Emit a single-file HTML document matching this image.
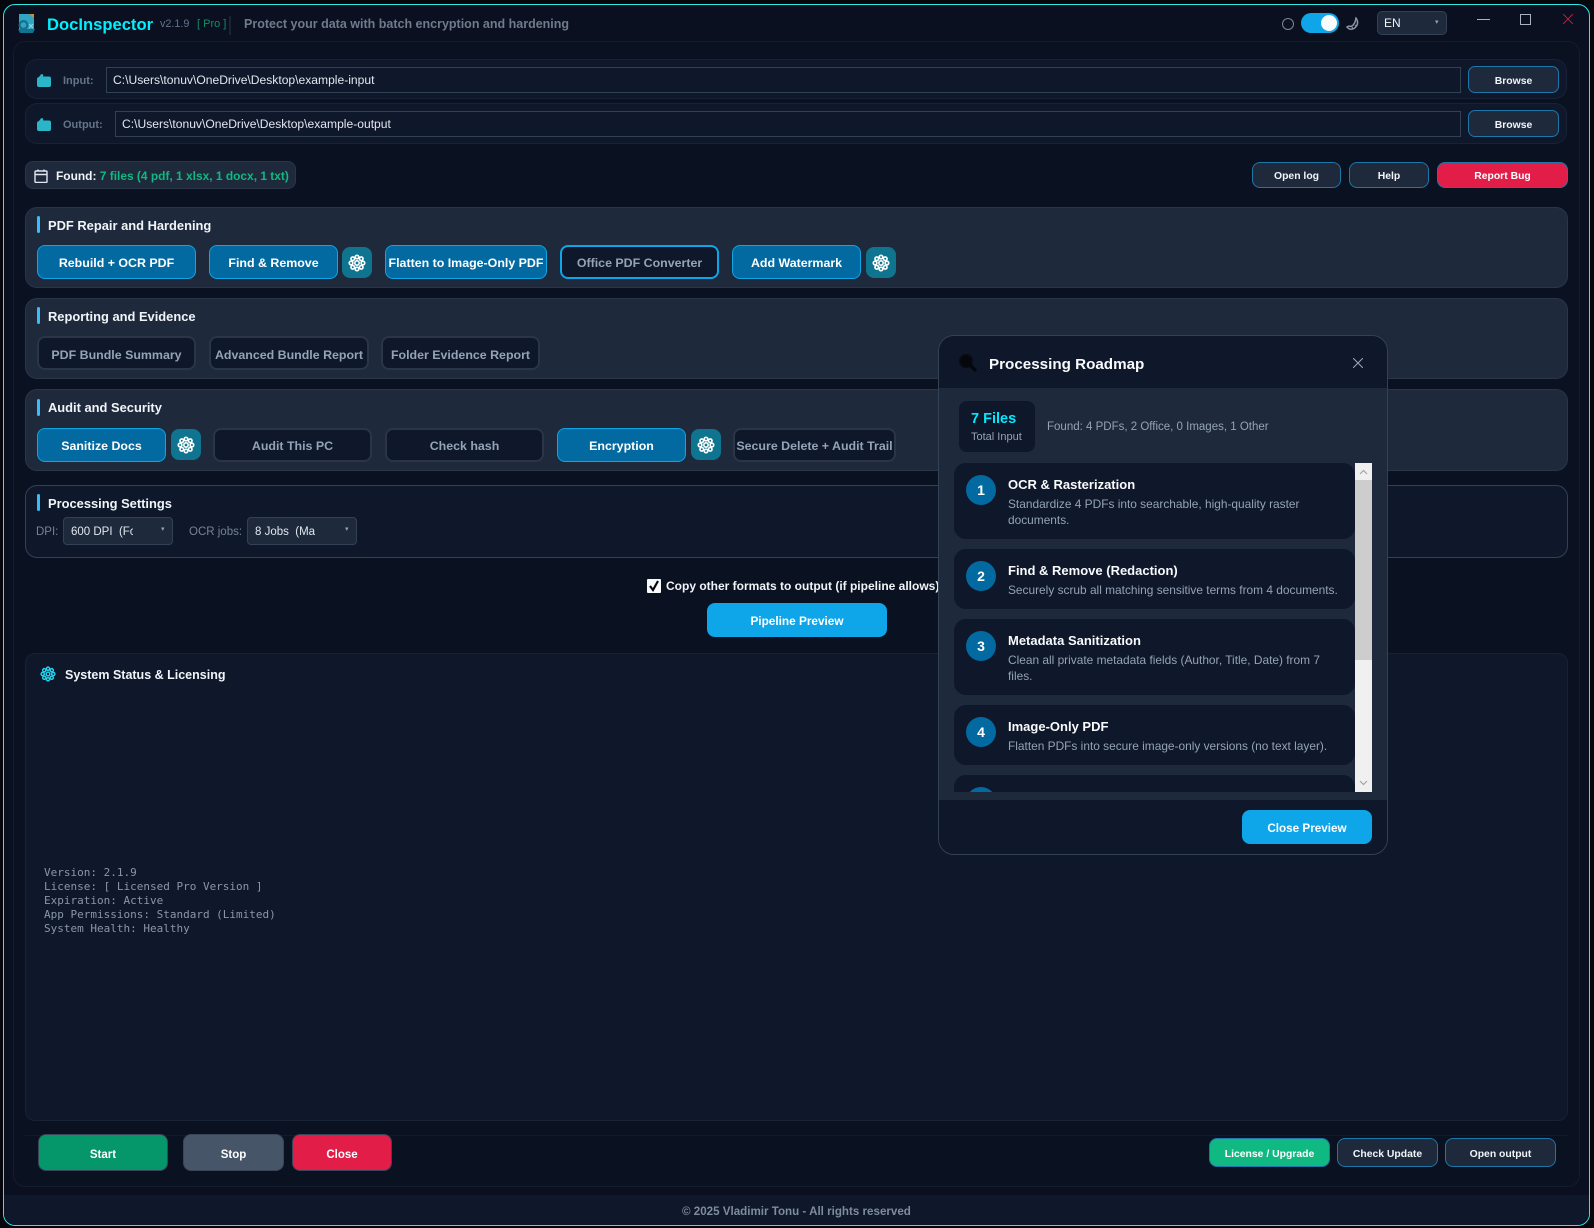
<!DOCTYPE html>
<html><head><meta charset="utf-8"><title>DocInspector</title>
<style>
*{box-sizing:border-box}
html,body{margin:0;padding:0;width:1594px;height:1228px;overflow:hidden;background:#05070d;font-family:"Liberation Sans",sans-serif}
.a{position:absolute}
.t{position:absolute;white-space:pre;line-height:16px}
.b{position:absolute;display:flex;align-items:center;justify-content:center;white-space:nowrap;font-weight:bold;font-size:12.4px;color:#fff;border-radius:8px}
.p{background:#0369a1;border:1.5px solid #0ea5e9;padding-top:1px}
.o{background:#0f172a;border:2px solid #0ea5e9;color:#94a3b8;padding-top:1px}
.d{background:#0f172a;border:2px solid #2a3648;color:#94a3b8;padding-top:4px}
.s{background:#1e293b;border:1.5px solid #1f76a8;font-size:10.4px;color:#f1f5f9;padding-top:2px}
.g{background:#0e7490;border-radius:8px;width:30px;height:31px;display:flex;align-items:center;justify-content:center}
.sec{position:absolute;left:25px;width:1543px;background:#1e293b;border:1px solid #2a3648;border-radius:12px}
.bar{position:absolute;left:37px;width:3px;height:17px;background:#38bdf8;border-radius:2px}
.st{position:absolute;left:48px;font-size:12.9px;font-weight:bold;color:#f1f5f9;line-height:18px;white-space:pre}
.row{position:absolute;left:25px;width:1542px;background:#0f172a;border:1px solid #182235;border-radius:12px}
.in{position:absolute;background:#0f172a;border:1px solid #334155;color:#e2e8f0;font-size:12.1px;line-height:24px;padding-left:6px;white-space:pre}
.combo{position:absolute;background:#1e293b;border:1px solid #334155;border-radius:4px;height:28px;color:#e2e8f0;font-size:11.5px}
.card{position:absolute;left:0;width:401px;background:#0f172a;border-radius:12px}
.c{position:absolute;left:12px;top:12px;width:30px;height:30px;border-radius:50%;background:#0369a1;color:#fff;font-weight:bold;font-size:14px;display:flex;align-items:center;justify-content:center}
.ct{position:absolute;left:54px;top:13px;color:#f8fafc;font-weight:bold;font-size:13px;line-height:18px;white-space:pre}
.cd{position:absolute;left:54px;top:33px;width:335px;color:#94a3b8;font-size:11.9px;line-height:16px}
</style></head><body>
<svg width="0" height="0" style="position:absolute"><defs>
<symbol id="gear" viewBox="0 0 20 20"><g fill="none" stroke="currentColor" stroke-width="1.8"><circle cx="10" cy="3.4" r="2"/><circle cx="14.7" cy="5.3" r="2"/><circle cx="16.6" cy="10" r="2"/><circle cx="14.7" cy="14.7" r="2"/><circle cx="10" cy="16.6" r="2"/><circle cx="5.3" cy="14.7" r="2"/><circle cx="3.4" cy="10" r="2"/><circle cx="5.3" cy="5.3" r="2"/><circle cx="10" cy="10" r="2.4"/></g></symbol>
<symbol id="folder" viewBox="0 0 14 13"><path fill="#2bb5c9" d="M2 3 L4 .2 L6 .2 L6.3 2.5 L12 2.5 Q14 2.5 14 4.5 L14 11 Q14 13 12 13 L2 13 Q0 13 0 11 L0 5 Q0 3.4 2 3Z"/></symbol>
</defs></svg>

<div class="a" style="left:3px;top:4px;width:1587px;height:1222px;background:#0a101f;border:1px solid #2ce8e8;border-radius:12px;overflow:hidden"></div>
<div class="a" style="left:4px;top:1195px;width:1585px;height:30px;background:#0f172a;border-radius:0 0 11px 11px"></div>
<div class="a" style="left:13px;top:41px;width:1567px;height:1146px;background:#0a1120;border:1px solid #141c2d;border-radius:12px"></div>

<!-- title bar -->
<svg class="a" style="left:16px;top:13px" width="20" height="21" viewBox="0 0 20 21"><path fill="#2fa6c4" d="M3 1 L14 1 L18 4 L18 18 L3 18Z"/><path fill="#d98a2e" d="M13.5 1 L18 1 L18 5Z"/><circle cx="7.5" cy="12" r="5" fill="#14708e"/><circle cx="7.5" cy="12" r="2.8" fill="#2fa6c4"/><path stroke="#8fd3e3" stroke-width="1.2" d="M13 11 L17 15 M17 11 L13 15"/><path fill="#14728f" d="M2 16 L19 16 L17 20 L4 20Z"/></svg>
<div class="t" style="left:47px;top:14px;font-size:16.6px;font-weight:bold;color:#00f0ff;line-height:22px">DocInspector</div>
<div class="t" style="left:160px;top:16px;font-size:10.8px;color:#64748b">v2.1.9</div>
<div class="t" style="left:197px;top:16px;font-size:11px;color:#0f8f68">[ Pro ]</div>
<div class="a" style="left:229px;top:16px;width:2px;height:19px;background:#1a2435"></div>
<div class="t" style="left:244px;top:16px;font-size:12.5px;font-weight:bold;color:#6f7b8d">Protect your data with batch encryption and hardening</div>
<div class="a" style="left:1282px;top:18px;width:12px;height:12px;border:1.5px solid #7c8794;border-radius:50%"></div>
<div class="a" style="left:1301px;top:13px;width:38px;height:20px;background:#0ea5e9;border-radius:10px"></div>
<div class="a" style="left:1321px;top:15px;width:16px;height:16px;background:#f8fafc;border-radius:50%"></div>
<svg class="a" style="left:1346px;top:17px" width="14" height="14" viewBox="0 0 14 14"><path fill="none" stroke="#8a94a3" stroke-width="1.5" d="M10 1 Q14 7 8 11.5 Q4 13.5 1 10 Q3 8.5 5 9.5 Q9 8 10 1Z"/><path stroke="#8a94a3" stroke-width="1" d="M6 10 L7 12 M9 8 L10.5 9.5"/></svg>
<div class="combo" style="left:1377px;top:11px;width:70px;height:24px;font-size:12px;line-height:22px;padding-left:6px;color:#f1f5f9;border-radius:5px">EN</div>
<div class="t" style="left:1435px;top:15px;font-size:7px;color:#94a3b8">▾</div>
<div class="a" style="left:1477px;top:19px;width:13px;height:1px;background:#a8b2c0"></div>
<div class="a" style="left:1520px;top:14px;width:11px;height:11px;border:1px solid #a8b2c0"></div>
<svg class="a" style="left:1563px;top:14px" width="10" height="10" viewBox="0 0 10 10"><path stroke="#a8213f" stroke-width="1.1" d="M0 0 L10 10 M10 0 L0 10"/></svg>

<!-- input rows -->
<div class="row" style="top:59px;height:40px"></div>
<div class="row" style="top:103px;height:41px"></div>
<svg class="a" style="left:37px;top:74px" width="14" height="13"><use href="#folder"/></svg>
<svg class="a" style="left:37px;top:118px" width="14" height="13"><use href="#folder"/></svg>
<div class="t" style="left:63px;top:73px;font-size:11px;font-weight:bold;color:#64748b">Input:</div>
<div class="t" style="left:63px;top:117px;font-size:11px;font-weight:bold;color:#64748b">Output:</div>
<div class="in" style="left:106px;top:67px;width:1355px;height:26px">C:\Users\tonuv\OneDrive\Desktop\example-input</div>
<div class="in" style="left:115px;top:111px;width:1346px;height:26px">C:\Users\tonuv\OneDrive\Desktop\example-output</div>
<div class="b s" style="left:1468px;top:66px;width:91px;height:27px;border-radius:7px;padding-top:3px">Browse</div>
<div class="b s" style="left:1468px;top:110px;width:91px;height:27px;border-radius:7px;padding-top:3px">Browse</div>

<!-- found -->
<div class="a" style="left:25px;top:161px;width:271px;height:28px;background:#1e293b;border:1px solid #2a3648;border-radius:8px"></div>
<svg class="a" style="left:34px;top:169px" width="14" height="14" viewBox="0 0 14 14"><rect x="1" y="2" width="12" height="11.5" rx="1" fill="none" stroke="#e2e8f0" stroke-width="1.4"/><path stroke="#e2e8f0" stroke-width="1.4" d="M1 5.5 L13 5.5 M4 .5 L4 2 M10 .5 L10 2"/></svg>
<div class="t" style="left:56px;top:168px;font-size:11.95px;font-weight:bold;color:#f1f5f9">Found: <span style="color:#10b981">7 files (4 pdf, 1 xlsx, 1 docx, 1 txt)</span></div>
<div class="b s" style="left:1252px;top:162px;width:89px;height:26px">Open log</div>
<div class="b s" style="left:1349px;top:162px;width:80px;height:26px">Help</div>
<div class="b s" style="left:1437px;top:162px;width:131px;height:26px;background:#e11d48;color:#fff">Report Bug</div>

<!-- PDF -->
<div class="sec" style="top:207px;height:81px"></div>
<div class="bar" style="top:216px"></div>
<div class="st" style="top:217px">PDF Repair and Hardening</div>
<div class="b p" style="left:37px;top:245px;width:159px;height:34px">Rebuild + OCR PDF</div>
<div class="b p" style="left:209px;top:245px;width:129px;height:34px">Find &amp; Remove</div>
<div class="g a" style="left:342px;top:247px;color:#fff"><svg width="18" height="18"><use href="#gear"/></svg></div>
<div class="b p" style="left:385px;top:245px;width:162px;height:34px">Flatten to Image-Only PDF</div>
<div class="b o" style="left:560px;top:245px;width:159px;height:34px">Office PDF Converter</div>
<div class="b p" style="left:732px;top:245px;width:129px;height:34px">Add Watermark</div>
<div class="g a" style="left:866px;top:247px;color:#fff"><svg width="18" height="18"><use href="#gear"/></svg></div>

<!-- Reporting -->
<div class="sec" style="top:298px;height:81px"></div>
<div class="bar" style="top:307px"></div>
<div class="st" style="top:308px">Reporting and Evidence</div>
<div class="b d" style="left:37px;top:336px;width:159px;height:34px">PDF Bundle Summary</div>
<div class="b d" style="left:209px;top:336px;width:160px;height:34px">Advanced Bundle Report</div>
<div class="b d" style="left:381px;top:336px;width:159px;height:34px">Folder Evidence Report</div>

<!-- Audit -->
<div class="sec" style="top:389px;height:82px"></div>
<div class="bar" style="top:399px"></div>
<div class="st" style="top:399px">Audit and Security</div>
<div class="b p" style="left:37px;top:428px;width:129px;height:34px">Sanitize Docs</div>
<div class="g a" style="left:171px;top:429px;color:#fff"><svg width="18" height="18"><use href="#gear"/></svg></div>
<div class="b d" style="left:213px;top:428px;width:159px;height:34px;padding-top:1px">Audit This PC</div>
<div class="b d" style="left:385px;top:428px;width:159px;height:34px;padding-top:1px">Check hash</div>
<div class="b p" style="left:557px;top:428px;width:129px;height:34px">Encryption</div>
<div class="g a" style="left:691px;top:429px;color:#fff"><svg width="18" height="18"><use href="#gear"/></svg></div>
<div class="b d" style="left:733px;top:428px;width:163px;height:34px;padding-top:1px">Secure Delete + Audit Trail</div>

<!-- Processing -->
<div class="sec" style="top:485px;height:73px;background:#0f172a;border-color:#334155"></div>
<div class="bar" style="top:494px"></div>
<div class="st" style="top:495px">Processing Settings</div>
<div class="t" style="left:36px;top:524px;font-size:11.5px;color:#75839a">DPI:</div>
<div class="combo" style="left:63px;top:517px;width:110px"><span class="a" style="left:7px;top:6px;width:62px;overflow:hidden;white-space:pre;line-height:16px">600 DPI  (Fc</span><span class="a" style="left:97px;top:7px;font-size:7px;color:#94a3b8">▾</span></div>
<div class="t" style="left:189px;top:524px;font-size:11.5px;color:#75839a">OCR jobs:</div>
<div class="combo" style="left:247px;top:517px;width:110px"><span class="a" style="left:7px;top:6px;width:62px;overflow:hidden;white-space:pre;line-height:16px">8 Jobs  (Ma</span><span class="a" style="left:97px;top:7px;font-size:7px;color:#94a3b8">▾</span></div>

<div class="a" style="left:647px;top:579px;width:14px;height:14px;background:#f8fafc;border-radius:1px"></div>
<svg class="a" style="left:647px;top:579px" width="14" height="14" viewBox="0 0 14 14"><path fill="none" stroke="#05070d" stroke-width="2.2" d="M3 7 L6 11 L11 2"/></svg>
<div class="t" style="left:666px;top:578px;font-size:12px;font-weight:bold;color:#f1f5f9">Copy other formats to output (if pipeline allows)</div>
<div class="b" style="left:707px;top:603px;width:180px;height:34px;background:#0ea5e9;font-size:11.8px;padding-top:1px">Pipeline Preview</div>

<!-- System -->
<div class="a" style="left:25px;top:653px;width:1543px;height:468px;background:#0f172a;border:1px solid #182235;border-radius:10px"></div>
<svg class="a" style="left:40px;top:666px;color:#22d3ee" width="16" height="16"><use href="#gear"/></svg>
<div class="t" style="left:65px;top:667px;font-size:12.5px;font-weight:bold;color:#f1f5f9">System Status &amp; Licensing</div>
<div class="a" style="left:44px;top:866px;font:11px/14px 'DejaVu Sans Mono',monospace;color:#8a97a8;white-space:pre">Version: 2.1.9
License: [ Licensed Pro Version ]
Expiration: Active
App Permissions: Standard (Limited)
System Health: Healthy</div>

<!-- bottom -->
<div class="a" style="left:25px;top:1135px;width:1543px;height:1px;background:#111a2a"></div>
<div class="b" style="left:38px;top:1134px;width:130px;height:37px;background:#059669;border:1.5px solid #3a4558;font-size:11.5px;padding-top:4px">Start</div>
<div class="b" style="left:183px;top:1134px;width:101px;height:37px;background:#475569;border:1.5px solid #3a4558;font-size:11.5px;padding-top:4px">Stop</div>
<div class="b" style="left:292px;top:1134px;width:100px;height:37px;background:#e11d48;border:1.5px solid #3a4558;font-size:11.5px;padding-top:4px">Close</div>
<div class="b s" style="left:1209px;top:1138px;width:121px;height:29px;background:#10b981;color:#fff;padding-top:4px">License / Upgrade</div>
<div class="b s" style="left:1337px;top:1138px;width:101px;height:29px;padding-top:4px">Check Update</div>
<div class="b s" style="left:1445px;top:1138px;width:111px;height:29px;padding-top:4px">Open output</div>
<div class="t" style="left:682px;top:1204px;font-size:11.6px;font-weight:bold;color:#7f8ca0">© 2025 Vladimir Tonu - All rights reserved</div>

<!-- modal -->
<div class="a" style="left:938px;top:335px;width:450px;height:520px;background:#1e293b;border:1px solid #334155;border-radius:16px;overflow:hidden">
  <div class="a" style="left:0;top:0;width:450px;height:52px;background:#0f172a"></div>
  <div class="a" style="left:0;top:464px;width:450px;height:56px;background:#0f172a"></div>
  <svg class="a" style="left:19px;top:17px" width="20" height="20" viewBox="0 0 20 20"><circle cx="8" cy="8" r="6.5" fill="#05070d" stroke="#0b0e14" stroke-width="1.5"/><path stroke="#05070d" stroke-width="3.4" stroke-linecap="round" d="M13 13 L17 17"/></svg>
  <div class="t" style="left:50px;top:19px;font-size:15.2px;line-height:20px;font-weight:bold;color:#f8fafc">Processing Roadmap</div>
  <svg class="a" style="left:414px;top:22px" width="10" height="10" viewBox="0 0 10 10"><path stroke="#94a3b8" stroke-width="1.1" d="M0 0 L10 10 M10 0 L0 10"/></svg>
  <div class="a" style="left:20px;top:65px;width:76px;height:51px;background:#0f172a;border-radius:8px"></div>
  <div class="t" style="left:32px;top:74px;font-size:14.5px;line-height:18px;font-weight:bold;color:#00eaff">7 Files</div>
  <div class="t" style="left:32px;top:93px;font-size:11px;color:#94a3b8">Total Input</div>
  <div class="t" style="left:108px;top:83px;font-size:11.5px;color:#94a3b8">Found: 4 PDFs, 2 Office, 0 Images, 1 Other</div>
  <div class="a" style="left:15px;top:127px;width:418px;height:329px;overflow:hidden">
    <div class="card" style="top:0;height:76px"><div class="c">1</div><div class="ct">OCR &amp; Rasterization</div><div class="cd">Standardize 4 PDFs into searchable, high-quality raster documents.</div></div>
    <div class="card" style="top:86px;height:60px"><div class="c">2</div><div class="ct">Find &amp; Remove (Redaction)</div><div class="cd">Securely scrub all matching sensitive terms from 4 documents.</div></div>
    <div class="card" style="top:156px;height:76px"><div class="c">3</div><div class="ct">Metadata Sanitization</div><div class="cd">Clean all private metadata fields (Author, Title, Date) from 7 files.</div></div>
    <div class="card" style="top:242px;height:60px"><div class="c">4</div><div class="ct">Image-Only PDF</div><div class="cd">Flatten PDFs into secure image-only versions (no text layer).</div></div>
    <div class="card" style="top:312px;height:60px"><div class="c">5</div></div>
    <div class="a" style="left:401px;top:0;width:17px;height:329px;background:#f0f0f0"></div>
    <div class="a" style="left:401px;top:17px;width:17px;height:180px;background:#cdcdcd"></div>
    <svg class="a" style="left:405px;top:6px" width="9" height="6" viewBox="0 0 9 6"><path fill="none" stroke="#a3a3a3" stroke-width="1.2" d="M1 5 L4.5 1.5 L8 5"/></svg>
    <svg class="a" style="left:405px;top:317px" width="9" height="6" viewBox="0 0 9 6"><path fill="none" stroke="#a3a3a3" stroke-width="1.2" d="M1 1 L4.5 4.5 L8 1"/></svg>
  </div>
  <div class="b" style="left:303px;top:474px;width:130px;height:34px;background:#0ea5e9;font-size:11.7px;padding-top:2px">Close Preview</div>
</div>
</body></html>
